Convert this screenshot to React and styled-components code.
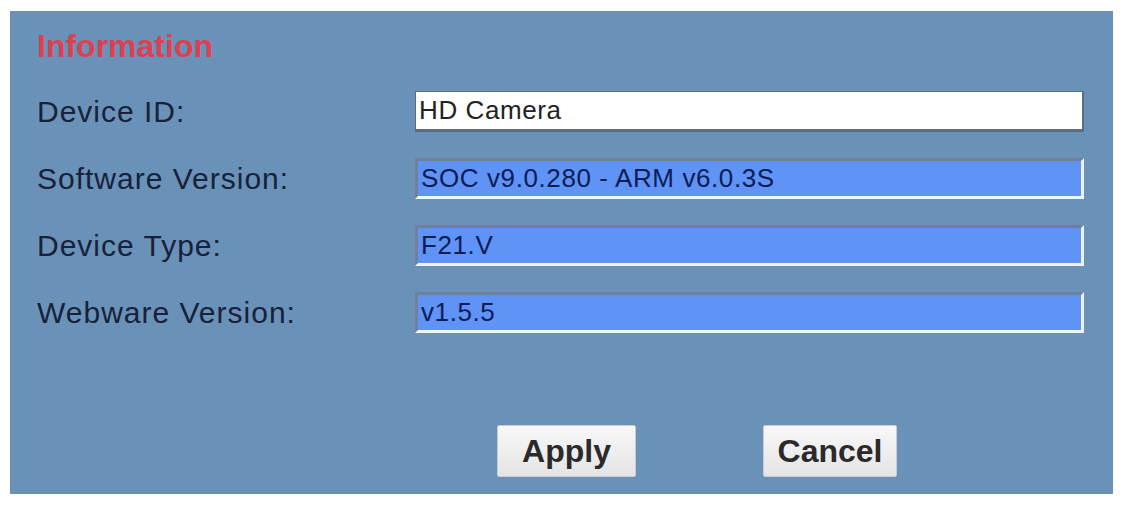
import React from "react";
import styled, { createGlobalStyle } from "styled-components";

const GlobalStyle = createGlobalStyle`
  html, body {
    margin: 0;
    padding: 0;
    background: #ffffff;
    font-family: "Liberation Sans", Arial, sans-serif;
  }
`;

const Panel = styled.div`
  box-sizing: border-box;
  margin: 11px 0 0 10px;
  width: 1103px;
  height: 483px;
  background: #6a91b8;
  padding: 15px 29px 0 27px;
  display: flex;
  flex-direction: column;
`;

const Title = styled.div`
  color: #dc4150;
  font-size: 32px;
  font-weight: bold;
  line-height: 40px;
`;

const Form = styled.div`
  margin-top: 25px;
  display: flex;
  flex-direction: column;
  gap: 26px;
`;

const Row = styled.div`
  display: flex;
  align-items: center;
  height: 41px;
`;

const Label = styled.div`
  width: 378px;
  color: #17223a;
  font-size: 30px;
  letter-spacing: 1px;
`;

const Field = styled.input`
  box-sizing: border-box;
  flex: 1;
  height: 41px;
  padding: 0 0 0 3px;
  font-family: "Liberation Sans", Arial, sans-serif;
  font-size: 26px;
  letter-spacing: 0.6px;
  color: ${(p) => (p.$readonly ? "#0c1c55" : "#222222")};
  background: ${(p) => (p.$readonly ? "#5f93f6" : "#ffffff")};
  border-style: solid;
  border-color: ${(p) =>
    p.$readonly
      ? "#70809a #eef4ff #eef4ff #70809a"
      : "#5c6c80 #5c6c80 #5c6c80 #5c6c80"};
  border-width: ${(p) => (p.$readonly ? "3px" : "1px 2px 3px 1px")};
  outline: none;
`;

const Buttons = styled.div`
  margin-top: 92px;
  display: flex;
  gap: 127px;
  padding-left: 460px;
`;

const Button = styled.button`
  box-sizing: border-box;
  width: ${(p) => p.$width}px;
  height: 52px;
  font-family: "Liberation Sans", Arial, sans-serif;
  font-size: 32px;
  font-weight: bold;
  color: #2a2a2a;
  background: linear-gradient(#f8f8f8, #e4e4e4);
  border: 1px solid #c8ccd2;
  border-radius: 2px;
  padding: 0;
`;

const rows = [
  { label: "Device ID:", value: "HD Camera", readonly: false },
  { label: "Software Version:", value: "SOC v9.0.280 - ARM v6.0.3S", readonly: true },
  { label: "Device Type:", value: "F21.V", readonly: true },
  { label: "Webware Version:", value: "v1.5.5", readonly: true },
];

export default function App() {
  return (
    <>
      <GlobalStyle />
      <Panel>
        <Title>Information</Title>
        <Form>
          {rows.map((r) => (
            <Row key={r.label}>
              <Label>{r.label}</Label>
              <Field
                defaultValue={r.value}
                readOnly={r.readonly}
                $readonly={r.readonly}
              />
            </Row>
          ))}
        </Form>
        <Buttons>
          <Button $width={139}>Apply</Button>
          <Button $width={134}>Cancel</Button>
        </Buttons>
      </Panel>
    </>
  );
}
